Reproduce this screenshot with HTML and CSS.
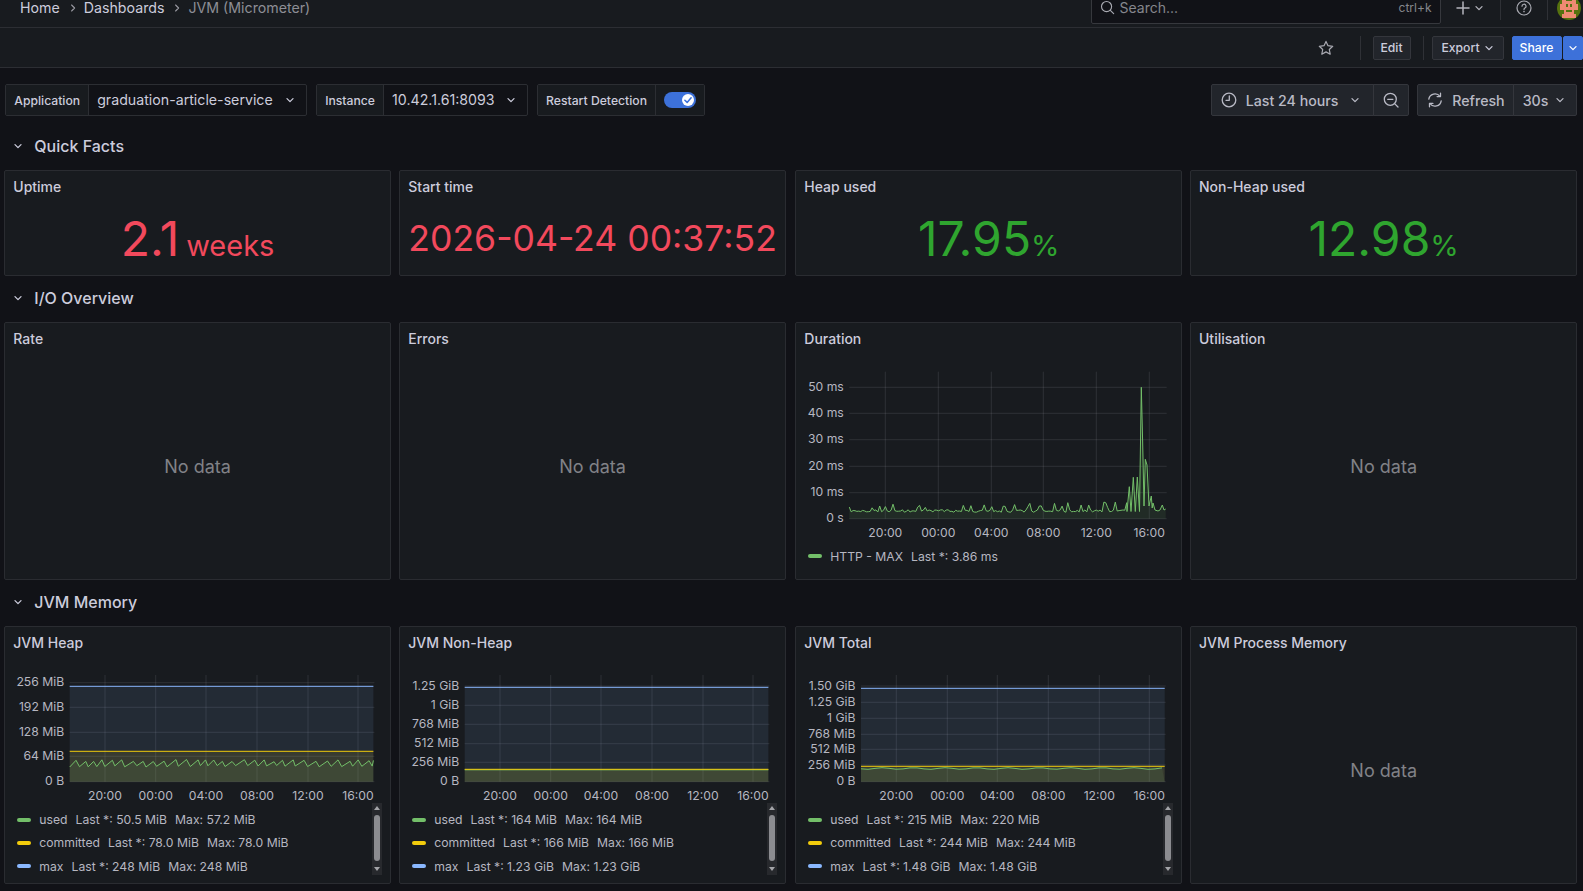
FILE: index.html
```html
<!DOCTYPE html>
<html lang="en">
<head>
    <meta charset="UTF-8">
    <title>JVM (Micrometer) - Dashboards - Grafana</title>
    <link rel="stylesheet" href="styles.css">
</head>
<body>

<svg class="sprites" width="0" height="0">
    <symbol id="chev" viewBox="0 0 10 10"><path d="M2 3.6 5 6.6 8 3.6" fill="none" stroke="currentColor" stroke-width="1.3" stroke-linecap="round" stroke-linejoin="round"/></symbol>
    <symbol id="crumb" viewBox="0 0 10 10"><path d="M3.6 2 6.6 5 3.6 8" fill="none" stroke="currentColor" stroke-width="1.1" stroke-linecap="round" stroke-linejoin="round"/></symbol>
</svg>

<header class="topbar">
    <nav class="crumbs">
        <span>Home</span>
        <svg class="crumb-sep"><use href="#crumb"/></svg>
        <span>Dashboards</span>
        <svg class="crumb-sep"><use href="#crumb"/></svg>
        <span class="crumb-current">JVM (Micrometer)</span>
    </nav>
    <div class="search">
        <svg class="search-icon" viewBox="0 0 16 16"><circle cx="7" cy="7" r="5.4" fill="none" stroke="currentColor" stroke-width="1.2"/><path d="M11 11l3.6 3.6" stroke="currentColor" stroke-width="1.2" stroke-linecap="round"/></svg>
        <span class="search-text">Search...</span>
        <span class="search-key">ctrl+k</span>
    </div>
    <svg class="plus-icon" viewBox="0 0 14 14"><path d="M7 1v12M1 7h12" stroke="currentColor" stroke-width="1.5" stroke-linecap="round"/></svg>
    <svg class="plus-chev"><use href="#chev"/></svg>
    <span class="top-divider"></span>
    <svg class="help-icon" viewBox="0 0 16 16"><circle cx="8" cy="8" r="7" fill="none" stroke="currentColor" stroke-width="1.2"/><path d="M6 6.2A2 2 0 1 1 8.9 8C8.2 8.4 8 8.8 8 9.6" fill="none" stroke="currentColor" stroke-width="1.2" stroke-linecap="round"/><circle cx="8" cy="11.6" r=".8" fill="currentColor"/></svg>
    <span class="top-divider help-divider"></span>
    <svg class="avatar" viewBox="0 0 24 24">
        <circle cx="12" cy="12" r="12" fill="#56720f"/>
        <path d="M5 0h4v5h6V0h4v8h2v6h-4v4h2v4H5v-4h2v-4H3V8h2z" fill="#ef8a72"/>
        <path d="M9 8h2v3H9zM13 8h2v3h-2zM9 14h6v2H9z" fill="#56720f"/>
    </svg>
</header>

<div class="toolbar">
    <svg class="star-icon" viewBox="0 0 16 16"><path d="M8 1.4l2 4.3 4.7.6-3.4 3.2.9 4.7L8 11.9l-4.2 2.3.9-4.7L1.300 6.300l4.700-.6z" fill="none" stroke="currentColor" stroke-width="1.200" stroke-linejoin="round"/></svg>
    <span class="tool-divider star-divider"></span>
    <button class="tool-btn edit-btn">Edit</button>
    <span class="tool-divider"></span>
    <button class="tool-btn export-btn">Export <svg class="chev"><use href="#chev"/></svg></button>
    <button class="tool-btn share-btn">Share</button>
    <button class="tool-btn share-more"><svg class="chev"><use href="#chev"/></svg></button>
</div>

<main class="content">
    <div class="controls">
        <div class="variables">
            <div class="var-group">
                <label class="var-label">Application</label>
                <div class="var-value app-value">graduation-article-service <svg class="chev"><use href="#chev"/></svg></div>
            </div>
            <div class="var-group">
                <label class="var-label">Instance</label>
                <div class="var-value instance-value">10.42.1.61:8093 <svg class="chev"><use href="#chev"/></svg></div>
            </div>
            <div class="var-group">
                <label class="var-label">Restart Detection</label>
                <div class="var-value switch-wrap">
                    <span class="switch">
                        <span class="switch-knob"><svg viewBox="0 0 10 10"><path d="M2.400 5.200 4.300 7 7.600 3.200" fill="none" stroke="#3d71d9" stroke-width="1.300" stroke-linecap="round" stroke-linejoin="round"/></svg></span>
                    </span>
                </div>
            </div>
        </div>
        <div class="time-controls">
            <div class="btn-group">
                <button class="ctl-btn time-btn">
                    <svg class="ctl-icon" viewBox="0 0 16 16"><circle cx="8" cy="8" r="6.800" fill="none" stroke="currentColor" stroke-width="1.300"/><path d="M8.300 4v4.300H5" fill="none" stroke="currentColor" stroke-width="1.300" stroke-linecap="round" stroke-linejoin="round"/></svg>
                    Last 24 hours
                    <svg class="chev"><use href="#chev"/></svg>
                </button>
                <button class="ctl-btn zoom-btn">
                    <svg class="ctl-icon" viewBox="0 0 16 16"><circle cx="7.300" cy="7.300" r="6" fill="none" stroke="currentColor" stroke-width="1.300"/><path d="M4.700 7.300h5.200M11.600 11.600l3.400 3.400" stroke="currentColor" stroke-width="1.300" stroke-linecap="round"/></svg>
                </button>
            </div>
            <div class="btn-group">
                <button class="ctl-btn refresh-btn">
                    <svg class="ctl-icon" viewBox="0 0 16 16"><path d="M1.800 7.200A6.300 6.300 0 0 1 13 4.300M14.200 8.800A6.300 6.300 0 0 1 3 11.700" fill="none" stroke="currentColor" stroke-width="1.300" stroke-linecap="round"/><path d="M13.500 1.200v3.400h-3.400M2.500 14.800v-3.400h3.400" fill="none" stroke="currentColor" stroke-width="1.300" stroke-linecap="round" stroke-linejoin="round"/></svg>
                    Refresh
                </button>
                <button class="ctl-btn interval-btn">30s <svg class="chev"><use href="#chev"/></svg></button>
            </div>
        </div>
    </div>

    <div class="dashboard">
        <!-- Quick Facts -->
        <div class="row-title"><svg class="row-chev"><use href="#chev"/></svg>Quick Facts</div>
        <div class="panels stat-row">
            <section class="panel">
                <h2 class="panel-title">Uptime</h2>
                <div class="stat red"><span class="stat-num">2.1</span><span class="stat-unit unit-word">weeks</span></div>
            </section>
            <section class="panel">
                <h2 class="panel-title">Start time</h2>
                <div class="stat stat-date red"><span class="stat-num">2026-04-24 00:37:52</span></div>
            </section>
            <section class="panel">
                <h2 class="panel-title">Heap used</h2>
                <div class="stat green"><span class="stat-num">17.95</span><span class="stat-unit">%</span></div>
            </section>
            <section class="panel">
                <h2 class="panel-title">Non-Heap used</h2>
                <div class="stat green"><span class="stat-num">12.98</span><span class="stat-unit">%</span></div>
            </section>
        </div>

        <!-- I/O Overview -->
        <div class="row-title"><svg class="row-chev"><use href="#chev"/></svg>I/O Overview</div>
        <div class="panels graph-row">
            <section class="panel">
                <h2 class="panel-title">Rate</h2>
                <div class="no-data">No data</div>
            </section>
            <section class="panel">
                <h2 class="panel-title">Errors</h2>
                <div class="no-data">No data</div>
            </section>
            <section class="panel">
                <h2 class="panel-title">Duration</h2>
                <svg class="chart chart-tall" id="chart-duration"></svg>
                <div class="legend-row single">
                    <i class="swatch sw-green"></i><span>HTTP - MAX</span><span class="legend-stat">Last *: 3.86 ms</span>
                </div>
            </section>
            <section class="panel">
                <h2 class="panel-title">Utilisation</h2>
                <div class="no-data">No data</div>
            </section>
        </div>

        <!-- JVM Memory -->
        <div class="row-title"><svg class="row-chev"><use href="#chev"/></svg>JVM Memory</div>
        <div class="panels graph-row">
            <section class="panel">
                <h2 class="panel-title">JVM Heap</h2>
                <svg class="chart" id="chart-heap"></svg>
                <div class="legend">
                    <div class="legend-list">
                        <div class="legend-row"><i class="swatch sw-green"></i><span>used</span><span class="legend-stat">Last *: 50.5 MiB</span><span class="legend-stat">Max: 57.2 MiB</span></div>
                        <div class="legend-row"><i class="swatch sw-yellow"></i><span>committed</span><span class="legend-stat">Last *: 78.0 MiB</span><span class="legend-stat">Max: 78.0 MiB</span></div>
                        <div class="legend-row"><i class="swatch sw-blue"></i><span>max</span><span class="legend-stat">Last *: 248 MiB</span><span class="legend-stat">Max: 248 MiB</span></div>
                    </div>
                    <div class="scrollbar"><i class="arrow-up"></i><i class="thumb"></i><i class="arrow-down"></i></div>
                </div>
            </section>
            <section class="panel">
                <h2 class="panel-title">JVM Non-Heap</h2>
                <svg class="chart" id="chart-nonheap"></svg>
                <div class="legend">
                    <div class="legend-list">
                        <div class="legend-row"><i class="swatch sw-green"></i><span>used</span><span class="legend-stat">Last *: 164 MiB</span><span class="legend-stat">Max: 164 MiB</span></div>
                        <div class="legend-row"><i class="swatch sw-yellow"></i><span>committed</span><span class="legend-stat">Last *: 166 MiB</span><span class="legend-stat">Max: 166 MiB</span></div>
                        <div class="legend-row"><i class="swatch sw-blue"></i><span>max</span><span class="legend-stat">Last *: 1.23 GiB</span><span class="legend-stat">Max: 1.23 GiB</span></div>
                    </div>
                    <div class="scrollbar"><i class="arrow-up"></i><i class="thumb"></i><i class="arrow-down"></i></div>
                </div>
            </section>
            <section class="panel">
                <h2 class="panel-title">JVM Total</h2>
                <svg class="chart" id="chart-total"></svg>
                <div class="legend">
                    <div class="legend-list">
                        <div class="legend-row"><i class="swatch sw-green"></i><span>used</span><span class="legend-stat">Last *: 215 MiB</span><span class="legend-stat">Max: 220 MiB</span></div>
                        <div class="legend-row"><i class="swatch sw-yellow"></i><span>committed</span><span class="legend-stat">Last *: 244 MiB</span><span class="legend-stat">Max: 244 MiB</span></div>
                        <div class="legend-row"><i class="swatch sw-blue"></i><span>max</span><span class="legend-stat">Last *: 1.48 GiB</span><span class="legend-stat">Max: 1.48 GiB</span></div>
                    </div>
                    <div class="scrollbar"><i class="arrow-up"></i><i class="thumb"></i><i class="arrow-down"></i></div>
                </div>
            </section>
            <section class="panel">
                <h2 class="panel-title">JVM Process Memory</h2>
                <div class="no-data">No data</div>
            </section>
        </div>
    </div>
</main>

<script src="charts.js"></script>
</body>
</html>
```

FILE: styles.css
```css
* {
    box-sizing: border-box;
}
html, body {
    height: 891px;
    overflow: hidden;
}
body {
    margin: 0;
    background-color: #111217;
    color: #ccccdc;
    font-family: Inter, "Noto Sans", sans-serif;
    font-size: 14px;
}
.sprites {
    position: absolute;
}
button {
    font-family: inherit;
    cursor: pointer;
}

/* top bar, its upper part is scrolled out of the window */
.topbar {
    display: flex;
    align-items: center;
    height: 40px;
    margin-top: -12px;
    padding: 0 2px 0 20px;
    background-color: #181b1f;
    border-bottom: 1px solid #2c2e33;
}
.crumbs {
    flex: 1;
    display: flex;
    align-items: center;
    font-size: 14.200px;
}
.crumb-sep {
    width: 10px;
    height: 10px;
    margin: 0 6px 0 8px;
    color: #9a9aa3;
}
.crumb-current {
    color: #8d8e95;
}
.search {
    display: flex;
    align-items: center;
    width: 350px;
    height: 32px;
    padding: 0 8px;
    background-color: #111217;
    border: 1px solid #36383d;
    border-radius: 2px;
    color: #85868c;
}
.search-icon {
    width: 15px;
    height: 15px;
    color: #a9aab2;
}
.search-text {
    flex: 1;
    margin-left: 5px;
}
.search-key {
    font-size: 12px;
}
.plus-icon {
    width: 14px;
    height: 14px;
    margin-left: 15.500px;
    color: #b4b5bd;
}
.plus-chev {
    width: 10px;
    height: 10px;
    margin-left: 4px;
    color: #b4b5bd;
}
.top-divider {
    width: 1px;
    height: 24px;
    margin-left: 16px;
    background-color: #2f3136;
}
.help-icon {
    width: 16px;
    height: 16px;
    margin-left: 15px;
    color: #a9aab2;
}
.help-divider {
    margin-left: 15px;
}
.avatar {
    width: 24px;
    height: 24px;
    margin-left: 9px;
}

/* dashboard toolbar */
.toolbar {
    display: flex;
    align-items: center;
    justify-content: flex-end;
    height: 40px;
    background-color: #181b1f;
    border-bottom: 1px solid #2c2e33;
}
.star-icon {
    width: 16px;
    height: 16px;
    color: #a9aab2;
}
.tool-divider {
    width: 1px;
    height: 24px;
    margin: 0 8px 0 12px;
    background-color: #2f3136;
}
.star-divider {
    margin: 0 12px 0 26px;
}
.tool-btn {
    display: flex;
    align-items: center;
    justify-content: center;
    height: 24px;
    padding: 0;
    background-color: #22252b;
    border: 1px solid #34363c;
    border-radius: 2px;
    color: #ccccdc;
    font-size: 12.200px;
    font-weight: 500;
}
.edit-btn {
    width: 38px;
}
.export-btn {
    width: 72px;
    gap: 4px;
    margin-right: 8px;
}
.share-btn {
    width: 50px;
    background-color: #3d71d9;
    border-color: #3d71d9;
    color: #fff;
}
.share-more {
    width: 20.500px;
    margin-left: 1px;
    background-color: #3d71d9;
    border-color: #3d71d9;
    color: #fff;
}
.chev {
    width: 10px;
    height: 10px;
    flex-shrink: 0;
}

/* variables and time range */
.content {
    padding: 16px 6.300px 0 4.300px;
}
.controls {
    display: flex;
    justify-content: space-between;
    height: 32px;
    padding-left: 1px;
}
.variables {
    display: flex;
    gap: 9px;
}
.var-group {
    display: flex;
    border: 1px solid #2c2e33;
    border-radius: 2px;
}
.var-label {
    display: flex;
    align-items: center;
    padding: 0 8px;
    background-color: #181b1f;
    border-right: 1px solid #2c2e33;
    font-size: 12.200px;
    font-weight: 500;
}
.var-value {
    display: flex;
    align-items: center;
    justify-content: space-between;
    padding: 1px 11px 2px 8px;
    font-size: 14.200px;
}
.app-value {
    width: 217px;
}
.instance-value {
    width: 143px;
}
.switch-wrap {
    width: 48px;
    padding: 0 8px;
    background-color: #181b1f;
}
.switch {
    display: flex;
    align-items: center;
    justify-content: flex-end;
    width: 32px;
    height: 16px;
    padding-right: 2px;
    background-color: #3d71d9;
    border-radius: 8px;
}
.switch-knob {
    display: flex;
    width: 12px;
    height: 12px;
    background-color: #fff;
    border-radius: 50%;
}
.time-controls {
    display: flex;
    gap: 8px;
}
.btn-group {
    display: flex;
}
.ctl-btn {
    display: flex;
    align-items: center;
    height: 32px;
    padding: 0;
    background-color: #22252b;
    border: 1px solid #34363c;
    color: #b9bac5;
    font-size: 14.200px;
    font-weight: 500;
}
.ctl-btn + .ctl-btn {
    margin-left: -1px;
}
.ctl-icon {
    width: 16px;
    height: 16px;
    flex-shrink: 0;
}
.time-btn {
    width: 163px;
    padding-left: 9px;
    gap: 9px;
    border-radius: 2px 0 0 2px;
}
.time-btn .chev {
    margin-left: 3px;
}
.zoom-btn {
    width: 36.500px;
    justify-content: center;
    border-radius: 0 2px 2px 0;
}
.refresh-btn {
    width: 96.500px;
    padding-left: 9px;
    gap: 9px;
    border-radius: 2px 0 0 2px;
}
.interval-btn {
    width: 64px;
    padding-left: 9px;
    gap: 7px;
    border-radius: 0 2px 2px 0;
}

/* dashboard grid */
.dashboard {
    display: flex;
    flex-direction: column;
    gap: 8px;
    margin-top: 16px;
}
.row-title {
    display: flex;
    align-items: center;
    height: 30px;
    padding: 0 0 2px 9px;
    font-size: 16px;
    font-weight: 500;
}
.row-chev {
    width: 10px;
    height: 10px;
    margin-right: 11px;
}
.panels {
    display: grid;
    grid-template-columns: 386.500px 386.500px 387.900px 386.700px;
    column-gap: 8.500px;
}
.stat-row {
    height: 106px;
}
.graph-row {
    height: 258px;
}
.panel {
    display: flex;
    flex-direction: column;
    min-width: 0;
    background-color: #181b1f;
    border: 1px solid #2a2c31;
    border-radius: 2px;
}
.panel:nth-child(3) {
    margin-left: 1px;
}
.panel:nth-child(4) {
    margin-left: -0.700px;
}
.panel-title {
    height: 33px;
    margin: 0;
    padding: 0 8px;
    font-size: 14px;
    font-weight: 500;
    line-height: 32px;
    flex-shrink: 0;
}
.no-data {
    flex: 1;
    display: flex;
    align-items: center;
    justify-content: center;
    padding-bottom: 2px;
    color: #818287;
    font-size: 18px;
}

/* stat panels */
.stat {
    display: flex;
    justify-content: center;
    align-items: baseline;
    padding-top: 11px;
    font-size: 48px;
    line-height: 48px;
    white-space: nowrap;
}
.stat-unit {
    font-size: 29px;
}
.unit-word {
    margin-left: 7px;
}
.stat-date {
    padding-top: 11px;
    font-size: 35.600px;
}
.red {
    color: #f2495c;
}
.green {
    color: #2fa52f;
}

/* time series */
.chart {
    display: block;
    width: 100%;
    height: 143px;
    flex-shrink: 0;
}
.chart-tall {
    height: 190px;
}
.chart text {
    fill: #b6b7c1;
    font-size: 12.200px;
}
.legend {
    display: flex;
    height: 72px;
    padding-right: 8px;
}
.legend-list {
    flex: 1;
    padding-top: 5px;
}
.legend-row {
    display: flex;
    align-items: center;
    height: 23.300px;
    padding-left: 12px;
    color: #b6b7c1;
    font-size: 12.200px;
}
.legend-row.single {
    height: 20px;
}
.legend-stat {
    margin-left: 8px;
}
.swatch {
    width: 14px;
    height: 4px;
    margin-right: 8px;
    border-radius: 2px;
}
.sw-green {
    background-color: #73bf69;
}
.sw-yellow {
    background-color: #f2cc0c;
}
.sw-blue {
    background-color: #8ab8ff;
}
.scrollbar {
    display: flex;
    flex-direction: column;
    align-items: center;
    width: 10px;
    background-color: #27292d;
}
.thumb {
    width: 6px;
    height: 46px;
    margin: 5px 0 6px;
    background-color: #8b8c90;
    border-radius: 3px;
}
.arrow-up,
.arrow-down {
    width: 0;
    height: 0;
    border-left: 3.500px solid transparent;
    border-right: 3.500px solid transparent;
}
.arrow-up {
    margin-top: 3px;
    border-bottom: 4px solid #a3a4a8;
}
.arrow-down {
    border-top: 4px solid #a3a4a8;
}
```

FILE: charts.js
```js
// draws the time series panels
const GREEN = '#73bf69';
const YELLOW = '#f2cc0c';
const BLUE = '#8ab8ff';
const TIMES = ['20:00', '00:00', '04:00', '08:00', '12:00', '16:00'];

let seed = 90210;
function rnd() {
    seed = (seed * 16807) % 2147483647;
    return seed / 2147483647;
}

function flat(y, left, right) {
    return [[left, y], [right, y]];
}

// used memory of the heap, a sawtooth from the gc runs
function sawtooth(left, right, low, high) {
    const points = [];
    let x = left;
    while (x < right) {
        points.push([x, low - rnd() * 1.5]);
        x += 5 + rnd() * 4;
        points.push([Math.min(x, right), high + rnd() * 2.5]);
        x += 2 + rnd() * 2;
    }
    return points;
}

function ripple(left, right, y) {
    const points = [];
    for (let x = left; x < right; x += 7) {
        points.push([x, y + Math.sin(x / 5) * 0.8]);
    }
    return points;
}

function durationSeries() {
    const points = [];
    for (let x = 53.3; x < 331; x += 1.9) {
        let y = 155 + (rnd() - 0.5) * 2.5;
        if (rnd() < 0.25) {
            y = 152 - rnd() * 6;
        }
        points.push([x, y]);
    }
    const tail = [[331, 155.5], [333.3, 130.7], [335, 155.5], [337.3, 121.3], [339.3, 155.5],
        [341.3, 121], [343.5, 155.5], [345.3, 31.3], [346.6, 84], [348, 150], [349.3, 103.3],
        [351, 109], [353, 150], [355.3, 140], [356.2, 152], [357, 147], [359, 154], [362, 155],
        [364, 154], [366.3, 149], [368, 154], [369.7, 153]];
    return points.concat(tail);
}

function drawChart(id, cfg) {
    const bottom = cfg.ticks[cfg.ticks.length - 1][1];
    let html = '';

    cfg.ticks.forEach(function (tick) {
        html += '<line x1="' + cfg.left + '" x2="' + (cfg.right + 1) + '" y1="' + tick[1] + '" y2="' + tick[1] + '" stroke="rgba(204,204,220,0.12)"/>';
        html += '<text x="' + (cfg.left - 5.5) + '" y="' + tick[1] + '" dy="0.3em" text-anchor="end">' + tick[0] + '</text>';
    });

    TIMES.forEach(function (label, i) {
        const x = cfg.grid[i];
        html += '<line x1="' + x + '" x2="' + x + '" y1="' + cfg.gridTop + '" y2="' + bottom + '" stroke="rgba(204,204,220,0.12)"/>';
        html += '<text x="' + x + '" y="' + (bottom + 18) + '" text-anchor="middle">' + label + '</text>';
    });

    cfg.series.forEach(function (s) {
        const line = s.points.map(function (p) {
            return p[0].toFixed(1) + ',' + p[1].toFixed(1);
        }).join(' ');
        const area = cfg.left + ',' + bottom + ' ' + line + ' ' + cfg.right + ',' + bottom;
        html += '<polygon points="' + area + '" fill="' + s.color + '" fill-opacity="0.1"/>';
        html += '<polyline points="' + line + '" fill="none" stroke="' + s.color + '"/>';
    });

    document.getElementById(id).innerHTML = html;
}

drawChart('chart-duration', {
    left: 53.3, right: 369.7, gridTop: 15.7,
    grid: [89.3, 142.3, 195.3, 247.3, 300.3, 353.3],
    ticks: [['50 ms', 31.3], ['40 ms', 57.3], ['30 ms', 83.7], ['20 ms', 110.3], ['10 ms', 136.7], ['0 s', 162.7]],
    series: [{ color: GREEN, points: durationSeries() }]
});

drawChart('chart-heap', {
    left: 64.7, right: 368.4, gridTop: 15,
    grid: [100, 150.7, 201, 252, 303, 353],
    ticks: [['256 MiB', 22.7], ['192 MiB', 47.3], ['128 MiB', 72.3], ['64 MiB', 96.3], ['0 B', 121.7]],
    series: [
        { color: BLUE, points: flat(26.3, 64.7, 368.4) },
        { color: YELLOW, points: flat(91.3, 64.7, 368.4) },
        { color: GREEN, points: sawtooth(64.7, 368.4, 107, 99.5) }
    ]
});

drawChart('chart-nonheap', {
    left: 64.7, right: 368.4, gridTop: 15,
    grid: [100, 150.7, 201, 252, 303, 353],
    ticks: [['1.25 GiB', 26], ['1 GiB', 45.3], ['768 MiB', 64.3], ['512 MiB', 83.7], ['256 MiB', 102.3], ['0 B', 121.7]],
    series: [
        { color: BLUE, points: flat(27.3, 64.7, 368.4) },
        { color: GREEN, points: flat(109.8, 64.7, 368.4) },
        { color: YELLOW, points: flat(109.3, 64.7, 368.4) }
    ]
});

drawChart('chart-total', {
    left: 65, right: 368.7, gridTop: 15,
    grid: [100.3, 151.3, 201.3, 252.3, 303.3, 353.3],
    ticks: [['1.50 GiB', 26], ['1.25 GiB', 42.3], ['1 GiB', 58.3], ['768 MiB', 74.3], ['512 MiB', 89.3], ['256 MiB', 105], ['0 B', 121.7]],
    series: [
        { color: BLUE, points: flat(28.3, 65, 368.7) },
        { color: YELLOW, points: flat(106.3, 65, 368.7) },
        { color: GREEN, points: ripple(65, 368.7, 108.5) }
    ]
});
```
